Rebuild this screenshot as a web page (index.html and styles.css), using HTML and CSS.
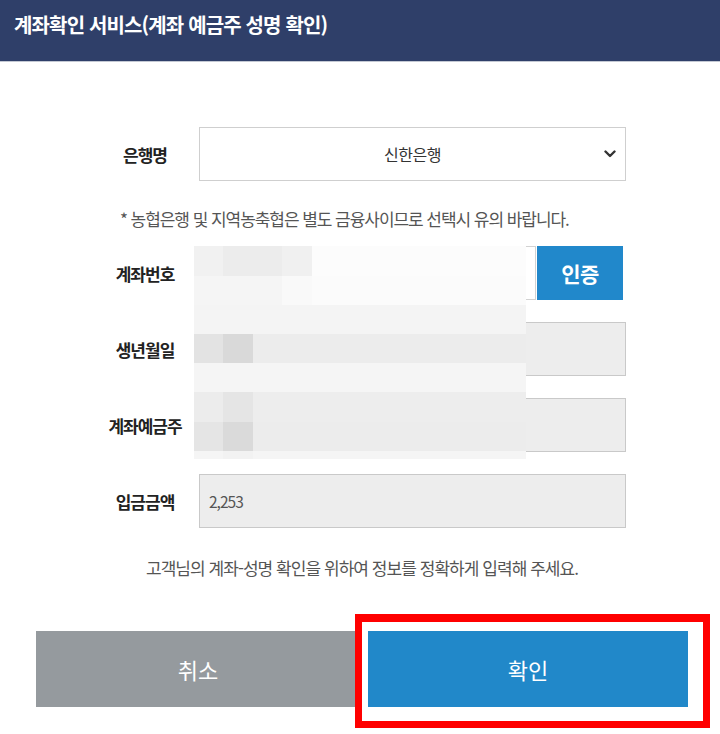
FILE: index.html
```html
<!DOCTYPE html>
<html lang="ko">
<head>
<meta charset="utf-8">
<title>계좌확인 서비스</title>
<link rel="stylesheet" href="styles.css">
</head>
<body>
<header class="topbar">
  <h1 class="title">계좌확인 서비스(계좌 예금주 성명 확인)</h1>
</header>
<main class="form">
  <div class="row row-bank">
    <div class="label">은행명</div>
    <div class="select">
      <span class="select-value">신한은행</span>
      <svg class="chev" width="12" height="8" viewBox="0 0 12 8"><polyline points="1.5,1.5 6,6 10.5,1.5" fill="none" stroke="#333" stroke-width="2.4" stroke-linecap="round" stroke-linejoin="round"/></svg>
    </div>
  </div>
  <p class="note">* 농협은행 및 지역농축협은 별도 금융사이므로 선택시 유의 바랍니다.</p>
  <div class="rows">
    <div class="row">
      <div class="label">계좌번호</div>
      <div class="input input-white"></div>
      <button class="btn-auth" type="button">인증</button>
    </div>
    <div class="row">
      <div class="label">생년월일</div>
      <div class="input input-gray"></div>
    </div>
    <div class="row">
      <div class="label">계좌예금주</div>
      <div class="input input-gray"></div>
    </div>
    <div class="row">
      <div class="label">입금금액</div>
      <div class="input input-gray input-text">2,253</div>
    </div>
    <div class="mosaic">
      <div class="mr mr0 h30"><span class="c w29 g1"></span><span class="c w30 g2"></span><span class="c w29 g2"></span><span class="c w30 g3"></span></div>
      <div class="mr mr1 h29"><span class="c w29 g4"></span><span class="c w30 g4"></span><span class="c w29 g4"></span><span class="c w30 g5"></span></div>
      <div class="mr mr2 h29"></div>
      <div class="mr mr3 h29"><span class="c w29 g6"></span><span class="c w30 g7"></span></div>
      <div class="mr mr4 h29"></div>
      <div class="mr mr5 h30"><span class="c w29 g2"></span><span class="c w30 g8"></span></div>
      <div class="mr mr6 h29"><span class="c w29 g8"></span><span class="c w30 g9"></span></div>
      <div class="mr mr7 h8"><span class="c w29 g4"></span><span class="c w30 g10"></span></div>
    </div>
  </div>
</main>
<p class="guide">고객님의 계좌-성명 확인을 위하여 정보를 정확하게 입력해 주세요.</p>
<footer class="actions">
  <button class="btn btn-cancel" type="button">취소</button>
  <button class="btn btn-ok" type="button">확인</button>
  <div class="highlight"></div>
</footer>
</body>
</html>
```

FILE: styles.css
```css
* { box-sizing: border-box; }
html, body { margin: 0; padding: 0; background: #fff; }
body {
  width: 720px;
  height: 734px;
  overflow: hidden;
  font-family: "Noto Sans CJK KR", "Noto Sans", sans-serif;
  color: #222;
  position: relative;
}
.topbar {
  height: 62px;
  background: #2f3f69;
  border-bottom: 1px solid #c3c8d3;
  padding: 10px 0 0 14px;
}
.title {
  margin: 0;
  font-size: 20px;
  line-height: 30px;
  font-weight: 700;
  color: #fff;
  letter-spacing: -0.85px;
}
.form {
  padding: 65px 94px 0 92px;
}
.row {
  display: flex;
  align-items: center;
  height: 54px;
}
.label {
  width: 106px;
  flex: none;
  text-align: center;
  font-size: 17px;
  font-weight: 700;
  letter-spacing: -1px;
  color: #222;
}
.select {
  flex: 1;
  height: 54px;
  margin-left: 1px;
  border: 1px solid #cfcfcf;
  background: #fff;
  display: flex;
  align-items: center;
  padding: 0 9px 0 24px;
}
.select-value {
  flex: 1;
  text-align: center;
  font-size: 16px;
  color: #333;
  letter-spacing: -0.5px;
}
.chev { flex: none; margin-left: 3px; }
.note {
  margin: 26px 0 15px 28px;
  font-size: 17px;
  line-height: 24px;
  color: #555;
  letter-spacing: -1.05px;
  white-space: nowrap;
}
.rows {
  position: relative;
  display: flex;
  flex-direction: column;
  gap: 22px;
}
.input {
  flex: 1;
  height: 54px;
  margin-left: 1px;
  border: 1px solid #c9c9c9;
}
.input-white { background: #fff; border-color: #d2d2d2; }
.input-gray { background: #ededed; }
.input-text {
  display: flex;
  align-items: center;
  padding-left: 9px;
  font-size: 15.5px;
  color: #555;
  letter-spacing: -1px;
}
.btn-auth {
  flex: none;
  width: 86px;
  height: 54px;
  margin: 0 3px 0 1px;
  border: 0;
  background: #2188cb;
  color: #fff;
  font-family: inherit;
  font-size: 21px;
  font-weight: 700;
  letter-spacing: -0.5px;
  padding: 0;
}
.mosaic {
  position: absolute;
  left: 102px;
  top: 0;
  width: 332px;
  height: 213px;
  overflow: hidden;
}
.mr { display: flex; }
.h30 { height: 30px; }
.h29 { height: 29px; }
.h8 { height: 8px; }
.mr0 { background: #fcfcfc; }
.mr1 { background: #fbfbfb; }
.mr2 { background: #f4f4f4; }
.mr3 { background: #ececec; }
.mr4 { background: #f5f5f5; }
.mr5 { background: #ededed; }
.mr6 { background: #ececec; }
.mr7 { background: #f5f5f5; }
.c { display: block; height: 100%; }
.w29 { width: 29px; }
.w30 { width: 30px; }
.g1 { background: #f1f1f1; }
.g2 { background: #ececec; }
.g3 { background: #f0f0f0; }
.g4 { background: #f5f5f5; }
.g5 { background: #f9f9f9; }
.g6 { background: #e3e3e3; }
.g7 { background: #d9d9d9; }
.g8 { background: #e5e5e5; }
.g9 { background: #dadada; }
.g10 { background: #f2f2f2; }
.guide {
  margin: 28px 0 0 4px;
  text-align: center;
  font-size: 17px;
  line-height: 24px;
  color: #555;
  letter-spacing: -0.95px;
}
.actions {
  display: flex;
  gap: 8px;
  padding: 51px 0 0 36px;
}
.btn {
  height: 76px;
  border: 0;
  padding: 0;
  color: #fff;
  font-family: inherit;
  font-size: 22px;
  font-weight: 400;
}
.btn-cancel { width: 324px; background: #959a9e; }
.btn-ok { width: 320px; background: #2188c9; }
.highlight {
  position: absolute;
  left: 355px;
  top: 614px;
  width: 355px;
  height: 114px;
  border: 7px solid #ff0000;
  border-top-width: 8px;
}
```
